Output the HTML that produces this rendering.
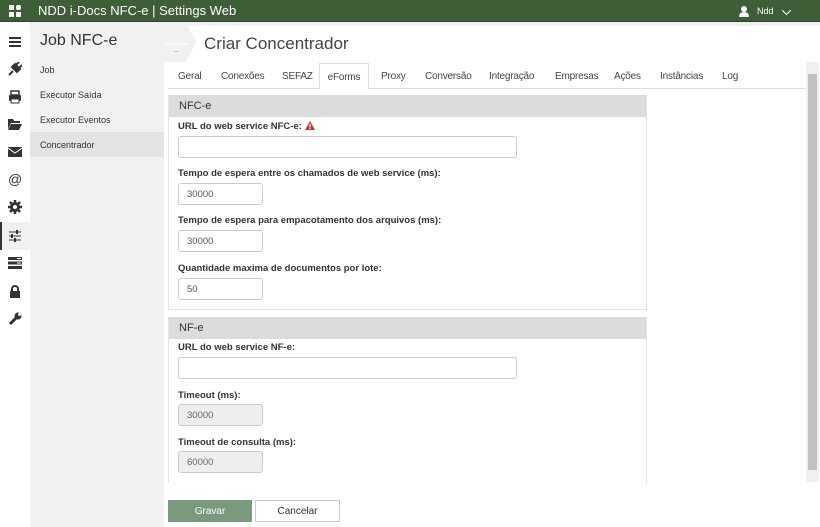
<!DOCTYPE html>
<html><head><meta charset="utf-8"><style>
*{box-sizing:border-box;margin:0;padding:0}
body{width:820px;height:527px;overflow:hidden;font-family:"Liberation Sans",sans-serif;background:#fff;position:relative;color:#333}
.hdr{position:absolute;left:0;top:0;width:820px;height:22px;background:#3e5e37;color:#fff;font-size:13px;border-bottom:1px solid #2c4427}
.hdr .t{position:absolute;left:38px;top:3px}
.ib{position:absolute;left:0;top:22px;width:30px;height:505px;background:#fff}
.ic{position:absolute;left:8px;width:14px;height:14px;color:#333}
.sub{position:absolute;left:30px;top:22px;width:134px;height:505px;background:#f1f1f1}
.sub h1{font-size:16px;font-weight:normal;position:absolute;left:10px;top:10px;color:#333}
.sub .i{position:absolute;left:0;width:134px;height:25px;font-size:9px;padding:8px 10px;color:#333}
.top{position:absolute;left:164px;top:22px;width:656px;height:40px;background:#fff}
.top h2{position:absolute;left:40px;top:12px;font-size:17px;font-weight:normal;color:#444}
.tabs{position:absolute;left:168px;top:63px;width:638px;height:26px;border-bottom:1px solid #ddd;font-size:10px}
.tabs span{position:absolute;top:8px;color:#444;letter-spacing:-0.2px}
.tabs .a{top:0;height:26px;width:50px;text-align:center;border:1px solid #ddd;border-bottom:1px solid #fff;background:#fff;padding-top:8px}
.pan{position:absolute;left:168px;width:479px;border:1px solid #e3e3e3;border-top:none;background:#fff}
.ph{height:22px;background:#dcdcdc;font-size:11px;padding:5px 10px;color:#333}
.lb{position:absolute;left:178px;font-size:9.5px;font-weight:bold;color:#333}
.in{position:absolute;left:178px;height:22px;border:1px solid #ccc;border-radius:3px;background:#fff;font-size:9.5px;padding:5px 8px;color:#555}
.in.d{background:#eee;color:#666}
.sb{position:absolute;left:806px;top:62px;width:13px;height:420px;background:#f0f0f0}
.sb div{position:absolute;left:2px;top:12px;width:9px;height:396px;background:#c1c1c1}
.btn{position:absolute;top:500px;height:22px;font-size:10px;display:flex;align-items:center;justify-content:center}
</style></head><body>
<div class="hdr">
<svg style="position:absolute;left:9px;top:5px" width="12" height="12"><rect x="0" y="0" width="5" height="5" fill="#fff"/><rect x="7" y="0" width="5" height="5" fill="#fff" rx="2"/><rect x="0" y="7" width="5" height="5" fill="#fff"/><rect x="7" y="7" width="5" height="5" fill="#fff"/></svg>
<span class="t">NDD i-Docs NFC-e | Settings Web</span>
<svg style="position:absolute;left:739px;top:6px" width="10" height="11"><circle cx="5" cy="3" r="3" fill="#fff"/><path d="M0 11 Q0 6 5 6 Q10 6 10 11Z" fill="#fff"/></svg>
<span style="position:absolute;left:757px;top:6px;font-size:9px">Ndd</span>
<svg style="position:absolute;left:782px;top:10px" width="9" height="5"><path d="M0 0L4.5 4.5L9 0" stroke="#fff" fill="none"/></svg>
</div>
<div class="ib">
<svg class="ic" style="top:13px" viewBox="0 0 14 14"><path d="M1 3h12M1 7h12M1 11h12" stroke="#333" stroke-width="2"/></svg>
<svg class="ic" style="top:40px" viewBox="0 0 14 14"><path d="M1 13L5 9M4 5L9 10L12 7L7 2ZM8 3L11 0M11 6L14 3" stroke="#333" stroke-width="2" fill="#333"/></svg>
<svg class="ic" style="top:68px" viewBox="0 0 14 14"><rect x="3" y="1" width="8" height="4" fill="none" stroke="#333" stroke-width="1.5"/><rect x="1" y="5" width="12" height="6" rx="1" fill="#333"/><rect x="3" y="9" width="8" height="4" fill="#fff" stroke="#333"/></svg>
<svg class="ic" style="top:95px" viewBox="0 0 14 14"><path d="M0 2h5l1 2h6v2H3L0 12Z" fill="#333"/><path d="M3 7h11l-3 6H0Z" fill="#333"/></svg>
<svg class="ic" style="top:123px" viewBox="0 0 14 14"><rect x="0" y="2" width="14" height="10" fill="#333"/><path d="M0 3L7 8L14 3" stroke="#fff" fill="none"/></svg>
<div class="ic" style="top:150px;font-size:14px;line-height:14px;text-align:center">@</div>
<svg class="ic" style="top:178px" viewBox="0 0 14 14"><circle cx="7" cy="7" r="5" fill="#333"/><path d="M7 0v14M0 7h14M2 2l10 10M12 2L2 12" stroke="#333" stroke-width="2.5"/><circle cx="7" cy="7" r="2" fill="#fff"/></svg>
<div style="position:absolute;left:0;top:200px;width:30px;height:28px;background:#f1f1f1;border-left:2px solid #333"></div>
<svg class="ic" style="top:207px" viewBox="0 0 14 14"><path d="M1 3h12M1 7h12M1 11h12" stroke="#333" stroke-width="1"/><rect x="8" y="1" width="2" height="4" fill="#333"/><rect x="3" y="5" width="2" height="4" fill="#333"/><rect x="6" y="9" width="2" height="4" fill="#333"/></svg>
<svg class="ic" style="top:234px" viewBox="0 0 14 14"><rect x="0" y="1" width="14" height="3" fill="#333"/><rect x="0" y="5.5" width="14" height="3" fill="#333"/><rect x="0" y="10" width="14" height="3" fill="#333"/><rect x="9" y="2" width="4" height="1" fill="#fff"/><rect x="9" y="6.5" width="4" height="1" fill="#fff"/></svg>
<svg class="ic" style="top:262px" viewBox="0 0 14 14"><path d="M4 7V5a3 3 0 016 0v2" stroke="#333" stroke-width="2" fill="none"/><rect x="2" y="7" width="10" height="7" fill="#333"/></svg>
<svg class="ic" style="top:290px" viewBox="0 0 14 14"><path d="M2 12L8 6" stroke="#333" stroke-width="3"/><circle cx="10" cy="4" r="3.5" fill="#333"/><circle cx="11.5" cy="2.5" r="1.5" fill="#fff"/></svg>
</div>
<div class="sub"><h1>Job NFC-e</h1>
<div class="i" style="top:35px">Job</div>
<div class="i" style="top:60px">Executor Saída</div>
<div class="i" style="top:85px">Executor Eventos</div>
<div class="i" style="top:110px;background:#e3e3e3">Concentrador</div>
</div>
<div class="top">
<div style="position:absolute;left:0;top:0;width:656px;height:4px;background:#f1f1f1"></div>
<svg style="position:absolute;left:0;top:0" width="36" height="40"><path d="M0 0H22L32 20L22 40H0Z" fill="#f1f1f1"/><path d="M0 22H25" stroke="#fff"/><rect x="10" y="29" width="5" height="1" fill="#ccc"/></svg>
<h2>Criar Concentrador</h2></div>
<div class="tabs">
<span style="left:10px">Geral</span><span style="left:53px">Conexões</span><span style="left:114px">SEFAZ</span>
<span class="a" style="left:151px">eForms</span>
<span style="left:213px">Proxy</span><span style="left:257px">Conversão</span><span style="left:321px">Integração</span><span style="left:387px">Empresas</span><span style="left:446px">Ações</span><span style="left:492px">Instâncias</span><span style="left:554px">Log</span>
</div>
<div class="sb"><div></div></div>
<div class="pan" style="top:95px;height:215px"><div class="ph">NFC-e</div></div>
<div class="pan" style="top:317px;height:166px;border-bottom:none"><div class="ph">NF-e</div></div>
<div class="lb" style="top:121px">URL do web service NFC-e: <svg width="10" height="9" style="vertical-align:-1px"><path d="M5 0L10 9H0Z" fill="#c0392b"/><rect x="4.4" y="3" width="1.2" height="3.5" fill="#fff"/><rect x="4.4" y="7" width="1.2" height="1.2" fill="#fff"/></svg></div>
<div class="in" style="top:136px;width:339px"></div>
<div class="lb" style="top:168px">Tempo de espera entre os chamados de web service (ms):</div>
<div class="in" style="top:183px;width:85px">30000</div>
<div class="lb" style="top:215px">Tempo de espera para empacotamento dos arquivos (ms):</div>
<div class="in" style="top:230px;width:85px">30000</div>
<div class="lb" style="top:263px">Quantidade maxima de documentos por lote:</div>
<div class="in" style="top:278px;width:85px">50</div>
<div class="lb" style="top:342px">URL do web service NF-e:</div>
<div class="in" style="top:357px;width:339px"></div>
<div class="lb" style="top:390px">Timeout (ms):</div>
<div class="in d" style="top:404px;width:85px">30000</div>
<div class="lb" style="top:437px">Timeout de consulta (ms):</div>
<div class="in d" style="top:451px;width:85px">60000</div>
<div class="btn" style="left:168px;width:84px;background:#7a9a7e;color:#fff">Gravar</div>
<div class="btn" style="left:255px;width:85px;border:1px solid #ccc;color:#333">Cancelar</div>
</body></html>
